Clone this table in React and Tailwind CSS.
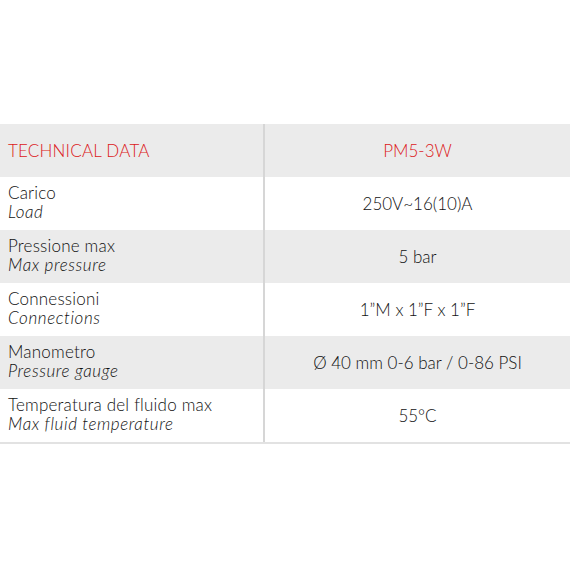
const rows = [
  ['Carico', 'Load', '250V~16(10)A'],
  ['Pressione max', 'Max pressure', '5 bar'],
  ['Connessioni', 'Connections', '1”M x 1”F x 1”F'],
  ['Manometro', 'Pressure gauge', 'Ø 40 mm 0-6 bar / 0-86 PSI'],
  ['Temperatura del fluido max', 'Max fluid temperature', '55°C'],
];

export default function App() {
  return (
    <div className="w-[570px] h-[570px] bg-white pt-[124px] text-[17px] leading-[19px] font-light text-[#111] font-['Lato',sans-serif]">
      <div className="border-b-2 border-[#e2e2e2]">
        <div className="grid grid-cols-[263px_2px_1fr] h-[53px] bg-[#ebebeb]">
          <div className="flex items-center pl-2 text-[#dc1820] tracking-[0.2px]">TECHNICAL DATA</div>
          <div className="bg-[#d6d6d6]"></div>
          <div className="flex items-center justify-center text-[#dc1820]">PM5-3W</div>
        </div>
        {rows.map(([it, en, val], i) => (
          <div
            key={it}
            className={`grid grid-cols-[263px_2px_1fr] h-[53px] ${i % 2 === 1 ? 'bg-[#ebebeb]' : 'bg-white'}`}
          >
            <div className="flex flex-col justify-center pl-2 pb-[3px]">
              <span className="tracking-[0.2px]">{it}</span>
              <span className="italic tracking-[0.6px]">{en}</span>
            </div>
            <div className="bg-[#d6d6d6]"></div>
            <div className="flex items-center justify-center">{val}</div>
          </div>
        ))}
      </div>
    </div>
  );
}
